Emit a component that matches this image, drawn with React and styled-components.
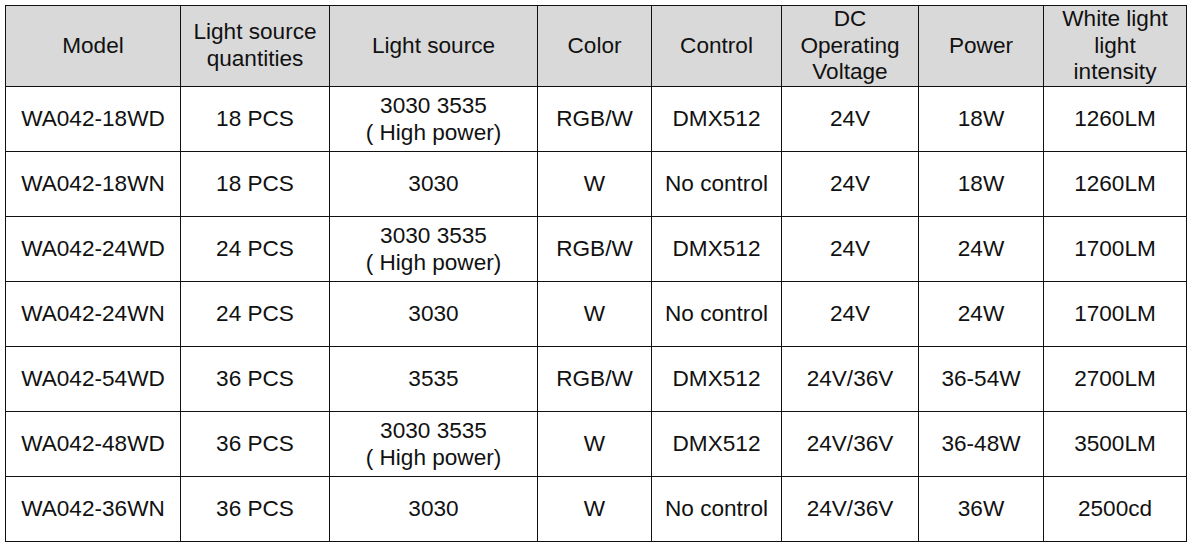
import React from "react";
import styled, { createGlobalStyle } from "styled-components";

const GlobalStyle = createGlobalStyle`
  html, body {
    margin: 0;
    padding: 0;
    background: #fff;
  }
  body {
    font-family: "Liberation Sans", Arial, sans-serif;
    color: #111;
  }
`;

const Page = styled.div`
  padding: 5px 0 0 5px;
`;

const Table = styled.table`
  border-collapse: collapse;
  table-layout: fixed;
  width: 1181px;
  font-size: 22.6px;
`;

const HeadCell = styled.th`
  height: 78px;
  padding: 0 2px;
  background: #d9d9d9;
  border: 1px solid #111;
  font-weight: normal;
  line-height: 26.5px;
  text-align: center;
  vertical-align: middle;
`;

const Cell = styled.td`
  height: 64px;
  padding: 0 2px;
  border: 1px solid #111;
  line-height: 27px;
  text-align: center;
  vertical-align: middle;
  white-space: nowrap;
`;

const columns = [
  { w: 175, label: ["Model"] },
  { w: 149, label: ["Light source", "quantities"] },
  { w: 208, label: ["Light source"] },
  { w: 114, label: ["Color"] },
  { w: 130, label: ["Control"] },
  { w: 137, label: ["DC", "Operating", "Voltage"] },
  { w: 125, label: ["Power"] },
  { w: 143, label: ["White light", "light", "intensity"] },
];

const HP = ["3030 3535", "( High power)"];

const rows = [
  ["WA042-18WD", "18 PCS", HP, "RGB/W", "DMX512", "24V", "18W", "1260LM"],
  ["WA042-18WN", "18 PCS", "3030", "W", "No control", "24V", "18W", "1260LM"],
  ["WA042-24WD", "24 PCS", HP, "RGB/W", "DMX512", "24V", "24W", "1700LM"],
  ["WA042-24WN", "24 PCS", "3030", "W", "No control", "24V", "24W", "1700LM"],
  ["WA042-54WD", "36 PCS", "3535", "RGB/W", "DMX512", "24V/36V", "36-54W", "2700LM"],
  ["WA042-48WD", "36 PCS", HP, "W", "DMX512", "24V/36V", "36-48W", "3500LM"],
  ["WA042-36WN", "36 PCS", "3030", "W", "No control", "24V/36V", "36W", "2500cd"],
];

const lines = (v) =>
  Array.isArray(v)
    ? v.map((l, i) => (
        <React.Fragment key={i}>
          {i > 0 && <br />}
          {l}
        </React.Fragment>
      ))
    : v;

export default function App() {
  return (
    <Page>
      <GlobalStyle />
      <Table>
        <colgroup>
          {columns.map((c, i) => (
            <col key={i} style={{ width: c.w }} />
          ))}
        </colgroup>
        <thead>
          <tr>
            {columns.map((c, i) => (
              <HeadCell key={i}>{lines(c.label)}</HeadCell>
            ))}
          </tr>
        </thead>
        <tbody>
          {rows.map((r) => (
            <tr key={r[0]}>
              {r.map((v, i) => (
                <Cell key={i}>{lines(v)}</Cell>
              ))}
            </tr>
          ))}
        </tbody>
      </Table>
    </Page>
  );
}
